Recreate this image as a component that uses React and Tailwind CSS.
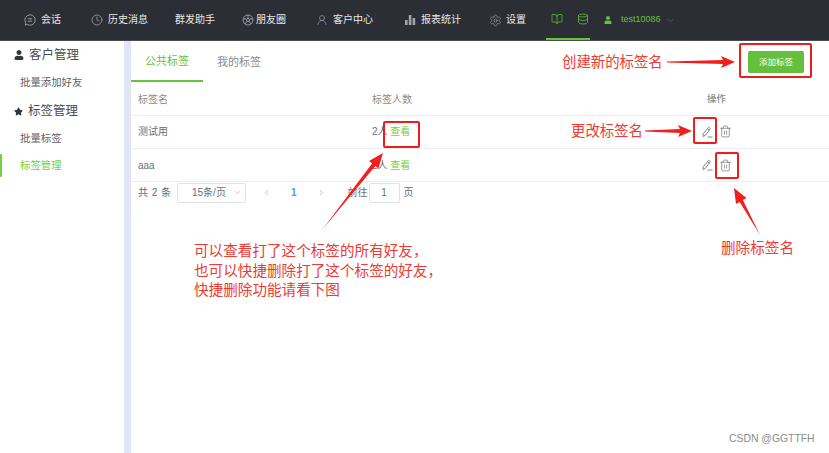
import React from "react";
import { Clock, UserRound, Settings, Database, BookOpen, ChevronDown, ChevronLeft, ChevronRight, Trash2 } from "lucide-react";
import { FaUser, FaStar } from "react-icons/fa";

const ChatIcon = () => (
  <svg width="12" height="12" viewBox="0 0 12 12" fill="none" stroke="#a3a5a9" strokeWidth="0.9">
    <path d="M6 .8a5.2 5.2 0 1 1-2.6 9.7l-2.1.6.6-2A5.2 5.2 0 0 1 6 .8z" />
    <path d="M3.8 4.8h4.4M3.8 7.2h4.4" />
  </svg>
);
const MomentsIcon = () => (
  <svg width="12" height="12" viewBox="0 0 12 12" fill="none" stroke="#a3a5a9" strokeWidth="0.9">
    <circle cx="6" cy="6" r="5" />
    <circle cx="6" cy="6" r="1.6" />
    <path d="M6 1v3.4M1.3 4.4l3.2 1M3 10l2-2.7M9 10 7 7.3M10.7 4.4l-3.2 1" />
  </svg>
);
const BarsIcon = () => (
  <svg width="12" height="12" viewBox="0 0 12 12" fill="#a3a5a9">
    <rect x="1" y="6" width="2.6" height="5" />
    <rect x="4.8" y="1" width="2.6" height="10" />
    <rect x="8.6" y="4" width="2.6" height="7" />
  </svg>
);
const PenIcon = () => (
  <svg width="11" height="12" viewBox="0 0 11 12" fill="none" stroke="#77797d" strokeWidth="0.9">
    <path d="M6.6 1.2 8.4 2.6 3.4 9.4 1 10.4l.2-2.6zM5.5 2.8l1.8 1.4" />
    <path d="M5.6 11H10.6" />
  </svg>
);

const Nav = ({ icon, label, className = "" }) => (
  <div className={`flex items-center ${className}`}>
    {icon}
    <span className="text-[10px] leading-none text-[#e8e9ea]">{label}</span>
  </div>
);

const Row = ({ name, count, className = "" }) => (
  <div className={`grid h-[33px] grid-cols-[241px_330px_1fr] items-center border-b border-[#edeef0] text-[10px] text-[#6b6d71] ${className}`}>
    <div className="pl-[7px]">{name}</div>
    <div>
      {count}人 <span className="text-[#74d03c]">查看</span>
    </div>
    <div className="flex items-center gap-[6px]">
      <PenIcon />
      <Trash2 size={13} strokeWidth={1.1} color="#55575b" />
    </div>
  </div>
);

const Box = ({ className }) => (
  <div className={`pointer-events-none absolute rounded-[2px] border-2 border-[#ee1c1c] ${className}`} />
);

export default function App() {
  return (
    <div className="relative flex h-[453px] w-[829px] flex-col overflow-hidden bg-white font-['Liberation_Sans','Noto_Sans_CJK_SC',sans-serif]">
      <header className="flex h-[41px] shrink-0 items-center border-b border-[#4a4c50] bg-[#2b2e35] pl-[24px]">
        <Nav label="会话" icon={<span className="mr-[5px] flex"><ChatIcon /></span>} />
        <Nav className="ml-[30px]" label="历史消息" icon={<Clock size={12} color="#a3a5a9" strokeWidth={1.5} className="mr-[5px]" />} />
        <Nav className="ml-[27px]" label="群发助手" />
        <Nav className="ml-[27px]" label="朋友圈" icon={<span className="mr-[2px] flex"><MomentsIcon /></span>} />
        <Nav className="ml-[30px]" label="客户中心" icon={<UserRound size={12} color="#a3a5a9" strokeWidth={1.3} className="mr-[5px]" />} />
        <Nav className="ml-[31px]" label="报表统计" icon={<span className="mr-[5px] flex"><BarsIcon /></span>} />
        <Nav className="ml-[28px]" label="设置" icon={<Settings size={13} color="#a3a5a9" strokeWidth={1.2} className="mr-[4px]" />} />
        <div className="ml-[20px] flex h-[40px] w-[44px] items-center justify-between border-b-2 border-[#67c23a] pl-[5px] pr-[1px]">
          <BookOpen size={12} color="#67c23a" strokeWidth={1.5} />
          <Database size={12} color="#67c23a" strokeWidth={1.5} />
        </div>
        <FaUser className="ml-[14px] text-[8px] text-[#67c23a]" />
        <span className="ml-[9px] text-[9px] text-[#67c23a]">test10086</span>
        <ChevronDown size={11} color="#3f6b3a" className="ml-[4px]" />
      </header>

      <div className="flex min-h-0 flex-1">
        <aside className="w-[124px] shrink-0 text-[#606266]">
          <div className="mt-[5px] flex h-[18px] items-center pl-[14px] text-[12.5px] text-[#4a4c50]">
            <FaUser className="mr-[5px] text-[10px] text-[#33363b]" />
            客户管理
          </div>
          <div className="mt-[12px] pl-[20px] text-[10.4px] leading-[14px]">批量添加好友</div>
          <div className="mt-[12px] flex h-[18px] items-center pl-[14px] text-[12.5px] text-[#4a4c50]">
            <FaStar className="mr-[5px] text-[9px] text-[#33363b]" />
            标签管理
          </div>
          <div className="mt-[12px] pl-[20px] text-[10.4px] leading-[14px]">批量标签</div>
          <div className="mt-[8px] flex h-[23px] items-center rounded-[1px] border-l-2 border-[#74d03c] pl-[18px] text-[10.4px] text-[#74d03c]">标签管理</div>
        </aside>

        <div className="w-[7px] shrink-0 bg-[#e4e4f7]" />

        <main className="min-w-0 flex-1">
          <div className="flex h-[42px] items-start justify-between pr-[25px]">
            <div className="flex">
              <div className="flex h-[41px] w-[72px] items-center justify-center border-b-2 border-[#67c23a] pt-[2px] text-[11px] text-[#67c23a]">公共标签</div>
              <div className="flex h-[41px] w-[72px] items-center justify-center pt-[2px] text-[11px] text-[#8a8c90]">我的标签</div>
            </div>
            <button className="mt-[10px] flex h-[22px] w-[56px] items-center justify-center rounded-[2px] bg-[#63bf3c] text-[8.5px] text-white">添加标签</button>
          </div>

          <div className="grid h-[33px] grid-cols-[241px_330px_1fr] items-center border-b border-[#edeef0] text-[10px] text-[#8a8c90]">
            <div className="pl-[7px]">标签名</div>
            <div>标签人数</div>
            <div className="pl-[5px] text-[9.5px] font-medium">操作</div>
          </div>
          <Row name="测试用" count={2} className="pb-[1px]" />
          <Row name="aaa" count={2} />

          <div className="flex h-[21px] items-center pl-[7px] text-[10px] text-[#6b6d71]">
            <span className="w-[39px] tracking-[0.5px]">共 2 条</span>
            <div className="flex h-[20px] w-[69px] items-center justify-between rounded-[2px] border border-[#dfe1e6] pl-[14px] pr-[3px]">
              <span>15条/页</span>
              <ChevronDown size={9} color="#b5b7bb" />
            </div>
            <ChevronLeft size={9} color="#a8aaae" className="ml-[16px]" />
            <span className="ml-[20px] text-[#409eff] font-bold">1</span>
            <ChevronRight size={9} color="#a8aaae" className="ml-[20px]" />
            <span className="ml-[22px]">前往</span>
            <div className="ml-[1px] flex h-[20px] w-[31px] items-center justify-center rounded-[2px] border border-[#dfe1e6]">1</div>
            <span className="ml-[4px]">页</span>
          </div>
        </main>
      </div>

      <Box className="left-[739px] top-[43px] h-[35px] w-[73px]" />
      <Box className="left-[383px] top-[121px] h-[27px] w-[37px]" />
      <Box className="left-[693px] top-[117px] h-[27px] w-[24px]" />
      <Box className="left-[715px] top-[152px] h-[27px] w-[24px]" />

      <svg className="pointer-events-none absolute left-0 top-0" width="829" height="453" fill="#f0201c">
        <polygon points="667,61.5 723,60 721,56 735,62 721,68 723,64 667,62.5" />
        <polygon points="645,130.5 680,129 678,125 692,131 678,137 680,133 645,131.5" />
        <polygon points="322,230 372.1,163.5 369,161 383,153 378.4,168.4 375.3,166" />
        <polygon points="760,235 742.9,200.1 746.5,198.1 734,188 736,203.9 739.7,201.9" />
      </svg>

      <div className="absolute left-[562px] top-[52px] text-[14.4px] leading-[20px] text-[#ee3a32]">创建新的标签名</div>
      <div className="absolute left-[571px] top-[121px] text-[14.4px] leading-[20px] text-[#ee3a32]">更改标签名</div>
      <div className="absolute left-[721px] top-[238px] text-[14.6px] leading-[20px] text-[#ee3a32]">删除标签名</div>
      <div className="absolute left-[194px] top-[242px] text-[14.6px] leading-[19.5px] text-[#ee3a32]">
        <div>可以查看打了这个标签的所有好友，</div>
        <div>也可以快捷删除打了这个标签的好友，</div>
        <div>快捷删除功能请看下图</div>
      </div>
      <div className="absolute left-[729px] top-[432px] text-[10.4px] leading-[14px] text-[#8c8c8c]">CSDN @GGTTFH</div>
    </div>
  );
}
